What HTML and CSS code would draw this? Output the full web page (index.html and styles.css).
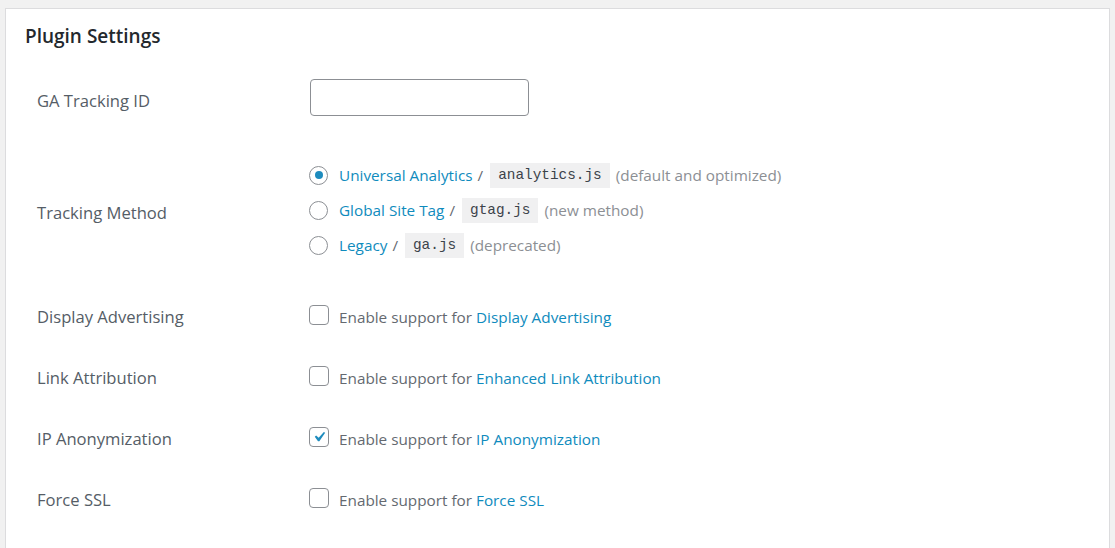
FILE: index.html
```html
<!DOCTYPE html>
<html lang="en">
<head>
<meta charset="utf-8">
<title>Plugin Settings</title>
<link rel="stylesheet" href="styles.css">
</head>
<body>
<div class="wrap">
  <div class="panel">
    <h2 class="title">Plugin Settings</h2>
    <div class="form">
      <div class="row row-id">
        <div class="label">GA Tracking ID</div>
        <div class="field"><input class="text-input" type="text"></div>
      </div>
      <div class="row row-method">
        <div class="label">Tracking Method</div>
        <div class="field radios">
          <label class="opt"><span class="radio checked"></span><a class="link">Universal Analytics</a><span class="sep">/</span><code class="code">analytics.js</code><span class="note">(default and optimized)</span></label>
          <label class="opt"><span class="radio"></span><a class="link">Global Site Tag</a><span class="sep">/</span><code class="code">gtag.js</code><span class="note">(new method)</span></label>
          <label class="opt"><span class="radio"></span><a class="link">Legacy</a><span class="sep">/</span><code class="code">ga.js</code><span class="note">(deprecated)</span></label>
        </div>
      </div>
      <div class="row row-check">
        <div class="label">Display Advertising</div>
        <div class="field"><label class="opt"><span class="box"></span><span class="txt">Enable support for <a class="link">Display Advertising</a></span></label></div>
      </div>
      <div class="row row-check">
        <div class="label">Link Attribution</div>
        <div class="field"><label class="opt"><span class="box"></span><span class="txt">Enable support for <a class="link">Enhanced Link Attribution</a></span></label></div>
      </div>
      <div class="row row-check">
        <div class="label">IP Anonymization</div>
        <div class="field"><label class="opt"><span class="box"><svg class="tick" viewBox="0 0 20 20" width="20" height="20"><path d="M14.83 4.89l1.34.94-5.81 8.38H9.02L5.78 9.67l1.34-1.25 2.57 2.4z"/></svg></span><span class="txt">Enable support for <a class="link">IP Anonymization</a></span></label></div>
      </div>
      <div class="row row-check">
        <div class="label">Force SSL</div>
        <div class="field"><label class="opt"><span class="box"></span><span class="txt">Enable support for <a class="link">Force SSL</a></span></label></div>
      </div>
    </div>
  </div>
</div>
</body>
</html>
```
FILE: styles.css
```css
* { box-sizing: border-box; }
html, body { margin: 0; padding: 0; }
body {
  background: #f1f1f1;
  font-family: "Open Sans", "Noto Sans", sans-serif;
  color: #50575e;
  height: 548px;
  overflow: hidden;
}
.wrap { padding: 8px 5px 0 5px; }
.panel {
  background: #fff;
  border: 1px solid #dcdcde;
  border-bottom: none;
  height: 560px;
  padding: 0 0 0 19px;
}
.title {
  margin: 0;
  padding-top: 14px;
  height: 53px;
  font-size: 19px;
  font-weight: 600;
  color: #23282d;
  line-height: 26px;
}
.form { display: flex; flex-direction: column; }
.row { display: flex; align-items: center; }
.row-id { height: 76px; }
.row-method { height: 148px; }
.row-check { height: 61px; }
.label {
  width: 284px;
  padding-left: 12px;
  font-size: 16.6px;
  color: #555d66;
}
.field { font-size: 15.3px; color: #646970; }
.text-input {
  display: block;
  width: 219px;
  height: 37px;
  border: 1px solid #8c8f94;
  border-radius: 4px;
  background: #fff;
  margin: 0 0 6px 1px;
}
.radios { display: flex; flex-direction: column; gap: 10px; padding-bottom: 4px; }
.opt { display: flex; align-items: center; white-space: nowrap; }
.radio {
  width: 19px; height: 19px;
  border: 1px solid #8c8f94;
  border-radius: 50%;
  margin-right: 11px;
  display: flex; align-items: center; justify-content: center;
  flex: none;
}
.radio.checked::after {
  content: "";
  width: 8px; height: 8px;
  border-radius: 50%;
  background: #1e8cbe;
}
.link { color: #0f8bbd; text-decoration: none; }
.sep { margin: 0 7px 0 5px; color: #646970; }
.code {
  font-family: "Liberation Mono", "DejaVu Sans Mono", monospace;
  font-size: 14.4px;
  background: #f0f0f1;
  color: #3c434a;
  padding: 3px 8px;
  line-height: 19px;
  margin-right: 6px;
}
.note { color: #8c8f94; }
.box {
  width: 20px; height: 20px;
  border: 1px solid #8c8f94;
  border-radius: 4px;
  margin-right: 10px;
  margin-bottom: 4px;
  flex: none;
  display: flex; align-items: center; justify-content: center;
}
.tick { width: 20px; height: 20px; fill: #1e8cbe; flex: none; }
.txt { color: #646970; }
```
